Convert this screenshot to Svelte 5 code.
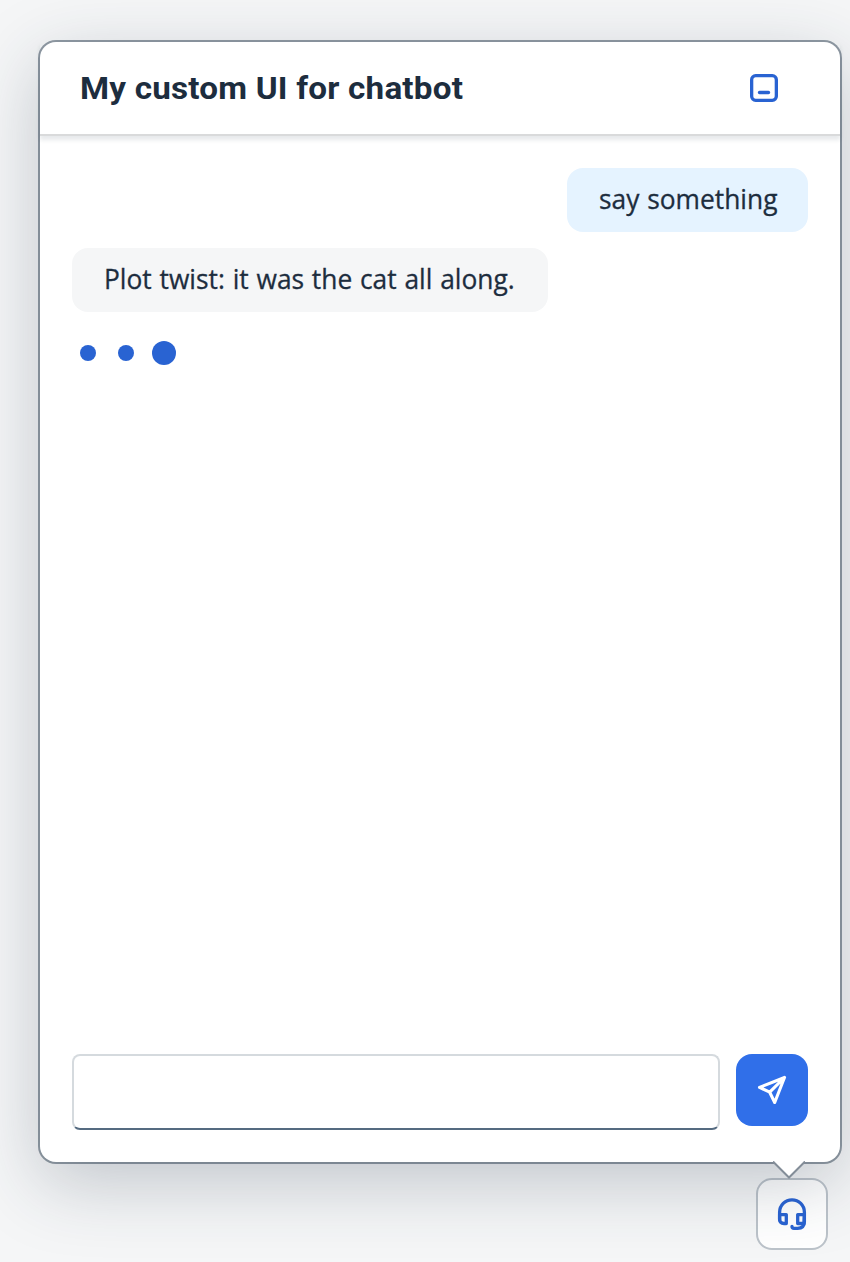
<script>
  const messages = [
    { from: 'user', text: 'say something' },
    { from: 'bot', text: 'Plot twist: it was the cat all along.' }
  ];
  let draft = $state('');
</script>

<main>
  <section class="popover">
    <header>
      <h1>My custom UI for chatbot</h1>
      <button class="minimize" aria-label="Minimize">
        <svg width="28" height="28" viewBox="0 0 28 28" fill="none" stroke="#2963d2" stroke-width="3.3">
          <rect x="1.65" y="1.65" width="24.7" height="24.7" rx="4" />
          <path d="M9.5 18.5h9" stroke-linecap="round" />
        </svg>
      </button>
    </header>
    <div class="messages">
      {#each messages as message}
        <div class="bubble {message.from}"><span>{message.text}</span></div>
      {/each}
      <div class="typing"><i></i><i></i><i class="big"></i></div>
    </div>
    <form onsubmit={(e) => e.preventDefault()}>
      <input bind:value={draft} aria-label="Message" />
      <button class="send" aria-label="Send">
        <svg width="32" height="32" viewBox="0 0 32 32" fill="none" stroke="#fff" stroke-width="3.1" stroke-linejoin="round" stroke-linecap="round">
          <path d="M28.5 3.5 3.5 13.4l10.2 4.8 5 10.3zM28.5 3.5 13.7 18.2" />
        </svg>
      </button>
    </form>
    <svg class="arrow" width="32" height="18" viewBox="0 0 32 18">
      <path d="M0 0h32L16 16z" fill="#fff" />
      <path d="M0 0.5 16 16.5 32 0.5" fill="none" stroke="#838d98" stroke-width="2" />
    </svg>
  </section>
  <button class="launcher" aria-label="Support">
    <svg width="32" height="34" viewBox="0 0 32 34" fill="none" stroke="#2963d2" stroke-width="3.3" stroke-linejoin="round">
      <path d="M3.6 23V15.2a12.4 12.4 0 0 1 24.8 0V24.5q0 6.8-6.8 6.8H18q-2 0-2-1.8" stroke-linecap="round" />
      <path d="M3.6 17.6H10.3v8.9H8q-4.4 0-4.4-4.4zM28.4 17.6H21.7v8.9H28z" />
    </svg>
  </button>
</main>

<style>
  :global(body) { margin: 0; background: #f5f6f7; }
  main {
    box-sizing: border-box; width: 850px; height: 1262px; padding: 42px 10px 0 40px;
    display: flex; flex-direction: column; overflow: hidden;
    font-family: 'Open Sans', sans-serif; color: #1d2d3e;
  }
  button { margin: 0; padding: 0; border: 0; background: none; display: flex; align-items: center; justify-content: center; }
  svg { display: block; }
  .popover {
    position: relative; flex: none; width: 800px; height: 1120px; border-radius: 16px; background: #fff;
    display: flex; flex-direction: column;
    box-shadow: 0 0 0 2px rgba(34, 53, 72, 0.48), 0 20px 72px rgba(34, 53, 72, 0.25);
  }
  header {
    flex: none; box-sizing: border-box; height: 94px; padding: 0 62px 0 40px;
    display: flex; align-items: center; justify-content: space-between;
    border-bottom: 2px solid #d9dadb; box-shadow: 0 4px 4px rgba(34, 53, 72, 0.11);
  }
  h1 { margin: 0; font: bold 32px/40px Roboto, sans-serif; letter-spacing: 0.2px; white-space: nowrap; transform: scaleX(1.038); transform-origin: left; }
  .messages { flex: 1; padding: 32px; display: flex; flex-direction: column; gap: 16px; }
  .bubble {
    height: 64px; padding: 0 32px 4px; border-radius: 16px; box-sizing: border-box; white-space: nowrap;
    display: flex; align-items: center; font-size: 28px; line-height: 40px; word-spacing: 1px;
  }
  .bubble span { transform: scaleX(0.941); transform-origin: left; -webkit-text-stroke: 0.3px #1d2d3e; }
  .user { align-self: flex-end; width: 241px; background: #e5f3ff; }
  .bot { align-self: flex-start; width: 476px; background: #f5f6f7; }
  .typing { display: flex; align-items: center; height: 50px; padding-left: 8px; }
  .typing i { width: 16px; height: 16px; margin-right: 22px; border-radius: 50%; background: #2963d2; }
  .typing .big { width: 24px; height: 24px; margin-left: -4px; }
  form { flex: none; display: flex; gap: 16px; padding: 0 32px 32px; }
  input {
    box-sizing: border-box; width: 648px; height: 76px; padding: 0 20px; font: inherit; font-size: 28px; outline: 0;
    background: #fff; border: 2px solid #d5dade; border-bottom-color: #556b81; border-radius: 8px;
  }
  .send { width: 72px; height: 72px; border-radius: 16px; background: #306fe9; }
  .arrow { position: absolute; left: 733px; top: 1119px; }
  .launcher {
    position: relative; z-index: -1; flex: none; box-sizing: border-box; width: 72px; height: 72px; margin: 16px 0 0 716px;
    border: 2px solid #bcc3ca; border-radius: 16px; background: #fff;
  }
</style>
